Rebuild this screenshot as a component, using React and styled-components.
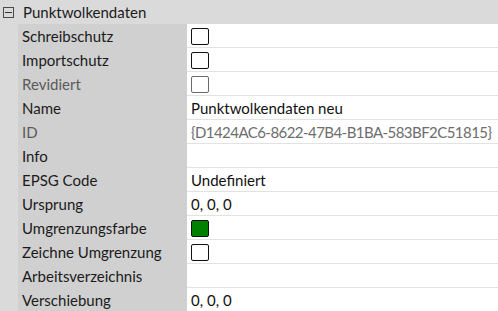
import React from "react";
import styled, { createGlobalStyle } from "styled-components";

const GlobalStyle = createGlobalStyle`
  html, body {
    margin: 0;
    padding: 0;
    background: #ffffff;
  }
  body {
    font-family: "Lato", "Liberation Sans", sans-serif;
    font-size: 15px;
    color: #1b1b1b;
  }
`;

const Grid = styled.div`
  width: 498px;
  height: 311px;
  overflow: hidden;
  display: grid;
  grid-template-columns: 18px 169px 1fr;
  grid-auto-rows: 24px;
  background: #ffffff;
`;

const Header = styled.div`
  grid-column: 1 / -1;
  display: flex;
  align-items: center;
  background: #dadada;
  padding-left: 3px;
  gap: 9px;
`;

const Toggle = styled.span`
  box-sizing: border-box;
  width: 11px;
  height: 11px;
  border: 1px solid #4a4a4a;
  display: flex;
  align-items: center;
  justify-content: center;
  &::after {
    content: "";
    width: 7px;
    height: 1px;
    background: #333;
  }
`;

const Gutter = styled.div`
  background: #dadada;
`;

const Label = styled.div`
  background: #d0d0d0;
  display: flex;
  align-items: center;
  padding-left: 4px;
  padding-bottom: 1px;
  color: ${(p) => (p.$muted ? "#5a5a5a" : "#1b1b1b")};
  white-space: nowrap;
`;

const Value = styled.div`
  box-sizing: border-box;
  display: flex;
  align-items: center;
  padding-left: 4px;
  border-bottom: 1px solid #e2e2e2;
  color: ${(p) => (p.$muted ? "#6d6d6d" : "#111111")};
  letter-spacing: ${(p) => (p.$muted ? "-0.55px" : "0")};
  white-space: nowrap;
`;

const Check = styled.span`
  box-sizing: border-box;
  width: 18px;
  height: 17px;
  margin-top: 1px;
  border: 1px solid ${(p) => (p.$disabled ? "#6a6a6a" : "#111111")};
  border-radius: 2px;
  background: ${(p) => p.$fill || "#ffffff"};
`;

const rows = [
  { label: "Schreibschutz", check: true },
  { label: "Importschutz", check: true },
  { label: "Revidiert", check: true, muted: true },
  { label: "Name", text: "Punktwolkendaten neu" },
  { label: "ID", text: "{D1424AC6-8622-47B4-B1BA-583BF2C51815}", muted: true },
  { label: "Info", text: "" },
  { label: "EPSG Code", text: "Undefiniert" },
  { label: "Ursprung", text: "0, 0, 0" },
  { label: "Umgrenzungsfarbe", color: "#008000" },
  { label: "Zeichne Umgrenzung", check: true },
  { label: "Arbeitsverzeichnis", text: "" },
  { label: "Verschiebung", text: "0, 0, 0" },
];

export default function App() {
  return (
    <>
      <GlobalStyle />
      <Grid>
        <Header>
          <Toggle />
          <span>Punktwolkendaten</span>
        </Header>
        {rows.map((r) => (
          <React.Fragment key={r.label}>
            <Gutter />
            <Label $muted={r.muted}>{r.label}</Label>
            <Value $muted={r.muted && !!r.text}>
              {r.check && <Check $disabled={r.muted} />}
              {r.color && <Check $fill={r.color} />}
              {r.text}
            </Value>
          </React.Fragment>
        ))}
      </Grid>
    </>
  );
}
